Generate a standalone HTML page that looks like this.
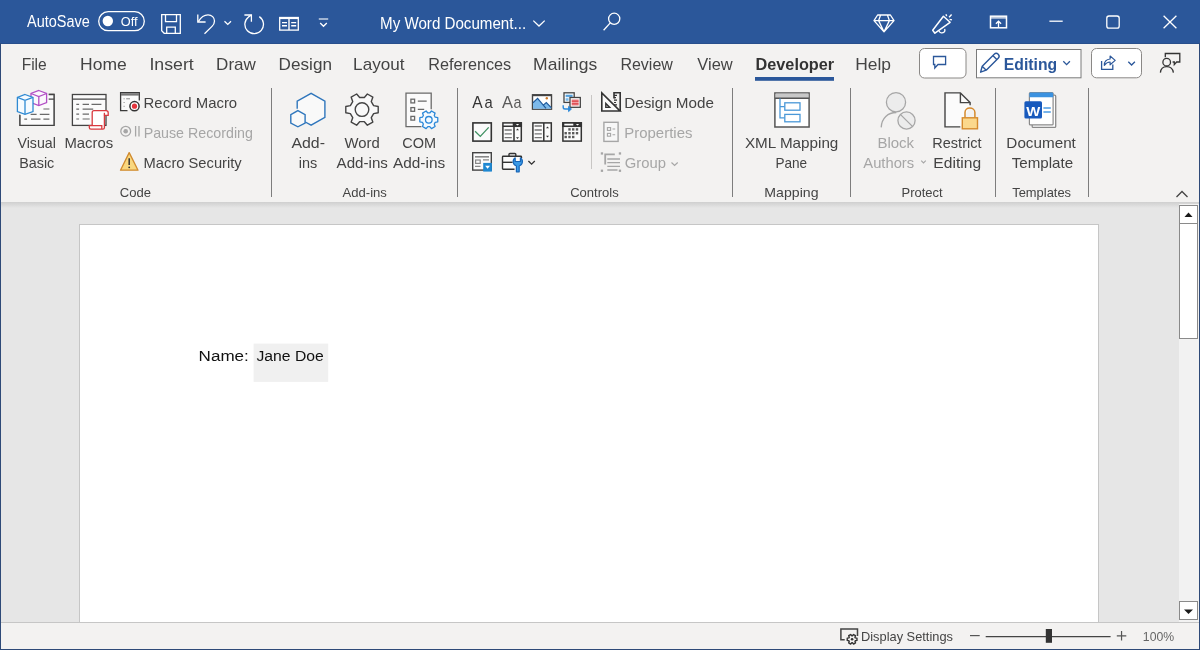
<!DOCTYPE html>
<html><head><meta charset="utf-8"><title>Word</title>
<style>
html,body{margin:0;padding:0;width:1200px;height:650px;overflow:hidden;background:#f3f2f1}
svg{display:block;will-change:transform}
text{font-family:"Liberation Sans",sans-serif;white-space:pre}
</style></head><body>
<svg width="1200" height="650" viewBox="0 0 1200 650">
<!-- backgrounds -->
<rect x="0" y="0" width="1200" height="650" fill="#f3f2f1"/>
<rect x="0" y="0" width="1200" height="43" fill="#2b579a"/>
<rect x="0" y="43" width="1200" height="1" fill="#284f8c"/>
<defs>
 <linearGradient id="shd" x1="0" y1="0" x2="0" y2="1">
  <stop offset="0" stop-color="#cfcfcf"/><stop offset="1" stop-color="#e6e6e6"/>
 </linearGradient>
</defs>
<rect x="1" y="202" width="1198" height="420" fill="#e6e6e6"/>
<rect x="1" y="202" width="1198" height="6" fill="url(#shd)"/>
<!-- page -->
<rect x="79.5" y="224.5" width="1019" height="420" fill="#ffffff" stroke="#c6c6c6" stroke-width="1"/>
<!-- scrollbar -->
<rect x="1179" y="204" width="20" height="418" fill="#f2f2f2"/>
<rect x="1179.5" y="205.5" width="18" height="18" fill="#ffffff" stroke="#8a8a8a"/>
<path d="M1184.5,217 L1188.5,212.5 L1192.5,217 Z" fill="#1a1a1a"/>
<rect x="1179.5" y="223.5" width="18" height="115" fill="#ffffff" stroke="#8a8a8a"/>
<rect x="1179.5" y="601.5" width="18" height="18" fill="#ffffff" stroke="#8a8a8a"/>
<path d="M1184,609.5 L1193,609.5 L1188.5,614 Z" fill="#1a1a1a"/>
<!-- status bar -->
<rect x="1" y="622" width="1198" height="27" fill="#f3f2f1"/>
<rect x="1" y="622" width="1198" height="1" fill="#c6c6c6"/>
<!-- window borders -->
<rect x="0" y="43" width="1" height="607" fill="#2e4a78"/>
<rect x="1199" y="43" width="1" height="607" fill="#2e4a78"/>
<rect x="0" y="649" width="1200" height="1" fill="#2e4a78"/>
<!-- doc content control -->
<rect x="253.6" y="343.6" width="74.6" height="38.3" fill="#f0f0f0"/>

<!-- ===== TITLE BAR ICONS ===== -->
<g fill="none" stroke="#ffffff" stroke-width="1.3">
 <!-- toggle -->
 <rect x="98.7" y="11.7" width="45.6" height="19" rx="9.5"/>
 <!-- save -->
 <path d="M161.7,14.6 H180.3 V33.3 H164.2 L161.7,30.8 Z"/>
 <path d="M165.5,14.6 V21.7 H176.5 V14.6"/>
 <path d="M166.7,33.3 V27.2 H175.3 V33.3"/>
 <!-- undo -->
 <path d="M197.8,14.6 V22 H205.6"/>
 <path d="M198.3,21.6 C201,17 204.5,14.8 208,14.8 C211.8,14.8 214.5,17.7 214.5,21 C214.5,23.2 213.6,24.8 212,26.4 L204.5,33.8"/>
 <!-- undo chevron -->
 <path d="M224.5,21.2 L227.75,24.4 L231,21.2"/>
 <!-- redo -->
 <path d="M259.3,16.6 A9.3,9.3 0 1 1 248.6,16.9 L251.4,15"/>
 <path d="M244.4,15 H251.4 V21.8"/>
 <!-- reading -->
 <rect x="279.7" y="17.5" width="18.6" height="12.6"/>
 <path d="M289,17.5 V30.1 M282,22.6 H287 M282,25.7 H287 M291.2,22.6 H296.2 M291.2,25.7 H296.2" stroke-width="1.4"/>
 <path d="M279.7,18.2 H298.3" stroke-width="1.8"/>
 <!-- customize -->
 <path d="M318.8,19 H328.2" stroke-width="1.1"/>
 <path d="M320.2,23 L323.5,26.3 L326.8,23"/>
 <!-- title chevron -->
 <path d="M533.3,20.6 L539,26 L544.7,20.6"/>
 <!-- search -->
 <circle cx="614.2" cy="18.8" r="5.6"/>
 <path d="M610.3,22.9 L603.6,30.3"/>
 <!-- diamond -->
 <path d="M877.6,15 H890.4 L894,20.6 L884,31.8 L874,20.6 Z M874,20.6 H894 M880.6,15 L878.6,20.6 L884,31.8 L889.4,20.6 L887.4,15" stroke-linejoin="round"/>
 <!-- megaphone -->
 <path d="M932.7,30.2 L943.4,16.3 L950.1,22.3 L934.9,33.2 Z" stroke-linejoin="round" stroke-width="1.5"/>
 <path d="M939,30.9 C939.5,33 942.5,33.6 944.2,32 C944.9,31.2 945.1,30 944.7,28.9" stroke-width="1.3"/>
 <path d="M945.9,14.3 L946.7,16.1 M949.1,17.2 L951.6,14.5 M949.6,19.4 L952,19.9" stroke-width="1.4"/>
<!-- ribbon display -->
 <rect x="990.5" y="16.2" width="16" height="11.6" stroke-width="1.5"/>
 <path d="M990.5,17.9 H1006.5" stroke-width="1.2"/>
 <path d="M998.5,27.8 V21.2 M995.9,23.8 L998.5,21.2 L1001.1,23.8" stroke-width="1.3"/>
<!-- min max close -->
 <path d="M1049.4,21.2 H1062.7"/>
 <rect x="1106.8" y="16" width="12.4" height="12.2" rx="2.2"/>
 <path d="M1163.6,15.8 L1176.4,28.2 M1176.4,15.8 L1163.6,28.2"/>
</g>
<circle cx="107.8" cy="21" r="5.2" fill="#ffffff"/>

<!-- ===== TAB ROW ===== -->
<rect x="755" y="77" width="79" height="3.8" fill="#2b579a"/>
<rect x="919.5" y="48.5" width="46.5" height="29.5" rx="5" fill="#ffffff" stroke="#8a8886"/>
<rect x="976.5" y="49.5" width="104.5" height="28.3" fill="#ffffff" stroke="#7a7a7a"/>
<rect x="1091.5" y="48.5" width="50" height="29.3" rx="5" fill="#ffffff" stroke="#8a8886"/>
<g fill="none" stroke="#2b579a" stroke-width="1.3">
 <path d="M933.5,56.5 H945.6 V64.5 H938 L934.8,68 V64.5 H933.5 Z" stroke-linejoin="miter"/>
 <!-- pencil -->
 <path d="M980.6,72.2 L982.2,66.2 L994.2,54.2 C995.3,53.1 997.1,53.1 998.2,54.2 C999.3,55.3 999.3,57.1 998.2,58.2 L986.2,70.2 Z M982.2,66.2 L986.2,70.2 M992.8,55.6 L996.8,59.6" stroke-width="1.4" stroke-linejoin="round"/>
 <path d="M1063.3,61.3 L1066.6,64.6 L1069.9,61.3"/>
 <!-- share -->
 <path d="M1101.6,61 V69.4 H1112.8 V64.4"/>
 <path d="M1104.3,65.3 C1104.3,61.6 1106.6,59.3 1110.1,59 V56 L1115.2,60.4 L1110.1,64.8 V62 C1107.6,62 1105.8,63.2 1104.3,65.3 Z" stroke-width="1.2" stroke-linejoin="round"/>
 <path d="M1128.3,61.7 L1131.6,65 L1134.9,61.7"/>
</g>
<g fill="none" stroke="#333333" stroke-width="1.3">
 <circle cx="1166.7" cy="62.2" r="3.8"/>
 <path d="M1160.4,72.6 C1160.8,68.6 1163.4,66.6 1166.7,66.6 C1170,66.6 1172.8,68.6 1173.4,72.6"/>
 <path d="M1165.3,57.3 V53.5 H1179.8 V62 H1176.6 L1174.3,64.6 V62 H1172.6"/>
</g>

<!-- ===== RIBBON SEPARATORS ===== -->
<g fill="#7d7d7d">
 <rect x="271" y="88" width="1" height="109"/>
 <rect x="457" y="88" width="1" height="109"/>
 <rect x="732" y="88" width="1" height="109"/>
 <rect x="850" y="88" width="1" height="109"/>
 <rect x="995" y="88" width="1" height="109"/>
 <rect x="1088" y="88" width="1" height="109"/>
</g>
<rect x="591" y="95" width="1" height="74" fill="#c8c6c4"/>
<path d="M1176.5,197 L1182,191.5 L1187.5,197" fill="none" stroke="#444" stroke-width="1.3"/>

<!-- ===== CODE GROUP ===== -->
<!-- Visual Basic -->
<g stroke-width="1.3" fill="none">
 <path d="M20,114.5 V125.3 H54 V94.5 H48.7" fill="#fbfbfb" stroke="#444"/>
 <path d="M20,114.5 V125.3 H54 V94.5 H44 V114.5 Z" fill="#fbfbfb" stroke="none"/>
 <path d="M20,115 V125.3 H54 V94.5 H48.7 M48.7,99.1 H54" stroke="#444"/>
 <path d="M43.4,109 H49.4 M30.6,114.3 H36.6 M39.8,114.3 H49.4 M24.3,119.1 H27.1 M31,119.1 H40.5 M43.4,119.1 H49.4" stroke="#6a6a6a" stroke-width="1.2"/>
 <!-- purple cube -->
 <path d="M38.8,90.5 L46.6,93.5 V102.6 L38.8,105.5 L31,102.6 V93.5 Z" fill="#fbf7fc" stroke="#b24ec5"/>
 <path d="M31,93.5 L38.8,96.6 L46.6,93.5 M38.8,96.6 V105.5" stroke="#b24ec5"/>
 <!-- blue cube -->
 <path d="M25,94.5 L33,97.4 V111.5 L25,114.3 L17.4,111.5 V97.4 Z" fill="#f6fbff" stroke="#2f8ad3"/>
 <path d="M17.4,97.4 L25,100.3 L33,97.4 M25,100.3 V114.3" stroke="#2f8ad3"/>
</g>
<!-- Macros -->
<g stroke-width="1.3" fill="none">
 <rect x="72.4" y="94.5" width="33.6" height="30.9" fill="#fbfbfb" stroke="#444"/>
 <path d="M72.4,99.2 H106" stroke="#444"/>
 <path d="M76.3,104.3 H79.1 M82.6,104.3 H89 M91.5,104.3 H101.4 M76.3,109.1 H79.1 M82.6,109.1 H93.2 M76.3,114.2 H79.1 M82.6,114.2 H89 M76.3,119 H79.1 M82.6,119 H89.7" stroke="#6a6a6a" stroke-width="1.2"/>
 <!-- scroll -->
 <path d="M92.2,126 V112.5 C92.2,111.3 93,110.6 94,110.6 H106 C107.3,110.6 108.2,111.5 108.2,112.8 V115.4 H104.4 V127.8 C104.4,128.6 103.7,129.2 102.9,129.2 H91 C89.9,129.2 89.3,128.5 89.3,127.5 V125.6 H101.8 V128.4" fill="#ffffff" stroke="#d9393f"/>
 <path d="M104.4,115.4 V112.8" stroke="#d9393f"/>
</g>
<!-- record macro -->
<g stroke-width="1.3" fill="none">
 <path d="M127.5,110.6 H120.6 V92.7 H139.3 V100.5" fill="#fbfbfb" stroke="#3a3a3a"/>
 <rect x="121" y="93.2" width="18" height="2.4" fill="#777" stroke="none"/>
 <path d="M123.6,98.8 H124.6 M126.2,98.8 H130 M123.6,102.5 H124.6 M123.6,106.3 H124.6" stroke="#888" stroke-width="1"/>
 <circle cx="134.5" cy="106.2" r="4.6" fill="#ffffff" stroke="#333" stroke-width="1.5"/>
 <circle cx="134.5" cy="106.2" r="2.6" fill="#e3343c" stroke="none"/>
</g>
<!-- pause -->
<g fill="none" stroke="#a6a6a6" stroke-width="1.3">
 <circle cx="125.7" cy="131.2" r="4.9"/>
 <path d="M135.6,126 V136.6 M139,126 V136.6"/>
</g>
<circle cx="125.7" cy="131.2" r="2.3" fill="#a6a6a6"/>
<!-- warning -->
<path d="M129.2,152.6 L120.5,170.2 H138 Z" fill="#f9d77e" stroke="#d08a2e" stroke-width="1.3" stroke-linejoin="round"/>
<path d="M129.2,158.3 V165" stroke="#333" stroke-width="1.5"/>
<circle cx="129.2" cy="167.3" r="0.9" fill="#333"/>

<!-- ===== ADD-INS GROUP ===== -->
<g stroke-width="1.4" fill="none" stroke="#2f76bc">
 <path d="M297.2,108.8 V101.1 L311.1,93.3 L324.9,101.1 V117.4 L311.1,125.2 L305.3,122" fill="#f9f9f9"/>
 <path d="M297.9,110.6 L305.1,114.6 V123 L297.9,126.8 L290.8,123 V114.6 Z" fill="#f9f9f9"/>
</g>
<!-- word add-ins gear -->
<path d="M373.63,105.60 L378.20,106.45 L378.20,112.75 L373.63,113.60 L371.28,117.67 L372.82,122.05 L367.37,125.20 L364.35,121.67 L359.65,121.67 L356.63,125.20 L351.18,122.05 L352.72,117.67 L350.37,113.60 L345.80,112.75 L345.80,106.45 L350.37,105.60 L352.72,101.53 L351.18,97.15 L356.63,94.00 L359.65,97.53 L364.35,97.53 L367.37,94.00 L372.82,97.15 L371.28,101.53 Z" fill="#f9f9f9" stroke="#444" stroke-width="1.4" stroke-linejoin="round"/>
<circle cx="362" cy="109.6" r="6.8" fill="none" stroke="#444" stroke-width="1.4"/>
<!-- COM add-ins -->
<g fill="none" stroke-width="1.3">
 <path d="M421.4,126.7 H406 V93.2 H431.2 V109.2" fill="#fbfbfb" stroke="#6a6a6a"/>
 <rect x="410.9" y="99.2" width="3.7" height="3.7" stroke="#6a6a6a"/>
 <rect x="410.9" y="107.6" width="3.7" height="3.7" stroke="#6a6a6a"/>
 <rect x="410.9" y="116.4" width="3.7" height="3.7" stroke="#6a6a6a"/>
 <path d="M417.8,101.1 H426.7 M417.8,109.3 H424.2" stroke="#6a6a6a"/>
 <path d="M435.20,117.22 L437.76,117.73 L437.76,121.87 L435.20,122.38 L434.24,124.05 L435.07,126.53 L431.49,128.60 L429.76,126.63 L427.84,126.63 L426.11,128.60 L422.53,126.53 L423.36,124.05 L422.40,122.38 L419.84,121.87 L419.84,117.73 L422.40,117.22 L423.36,115.55 L422.53,113.07 L426.11,111.00 L427.84,112.97 L429.76,112.97 L431.49,111.00 L435.07,113.07 L434.24,115.55 Z" fill="#f4faff" stroke="#2b88d8" stroke-linejoin="round"/>
 <circle cx="428.8" cy="119.8" r="3.3" stroke="#2b88d8"/>
</g>

<!-- ===== CONTROLS GROUP ===== -->
<!-- Aa rich -->
<text x="472.3" y="108.3" font-size="17.4" fill="#333" textLength="10.4" lengthAdjust="spacingAndGlyphs" style="font-family:'Liberation Sans'">A</text>
<text x="484.6" y="108.3" font-size="17.4" fill="#333" textLength="8.2" lengthAdjust="spacingAndGlyphs" style="font-family:'Liberation Sans'">a</text>
<!-- Aa plain -->
<text x="501.9" y="108.3" font-size="17.4" fill="#5a5a5a" textLength="11" lengthAdjust="spacingAndGlyphs" style="font-family:'Liberation Sans'">A</text>
<text x="513.6" y="108.3" font-size="17.4" fill="#5a5a5a" textLength="8" lengthAdjust="spacingAndGlyphs" style="font-family:'Liberation Sans'">a</text>
<!-- picture -->
<g stroke-width="1.4" fill="none">
 <rect x="532.5" y="94.8" width="19" height="14.4" fill="#ffffff" stroke="#444"/>
 <path d="M533,102.8 L537.6,98.4 L546,108.7 H533 Z" fill="#7cb9ea" stroke="none"/>
 <path d="M543,105 L546.3,102.6 L551.2,107.5 V108.7 H546 Z" fill="#7cb9ea" stroke="none"/>
 <path d="M533,102.8 L537.6,98.4 L546,108.4 M543.3,105.1 L546.3,102.6 L551.2,107.6" stroke="#1f5a9c" stroke-width="1.2"/>
 <path d="M532.5,95.3 H551.5" stroke="#444" stroke-width="1.8"/>
 <circle cx="546.8" cy="98.3" r="1.2" fill="#d07a2a" stroke="none"/>
</g>
<!-- building blocks -->
<g stroke-width="1.3" fill="none">
 <rect x="564" y="92.8" width="10.2" height="9.6" fill="#ffffff" stroke="#444"/>
 <rect x="565.6" y="94.6" width="7" height="2.6" fill="#7dbbe9" stroke="none"/>
 <path d="M565.8,95.9 H572.4" stroke="#3b8fd6" stroke-width="1"/>
 <rect x="565.6" y="98.2" width="3" height="2.6" fill="#7dbbe9" stroke="none"/>
 <rect x="570" y="97.5" width="10.3" height="9.8" fill="#ffffff" stroke="#444"/>
 <rect x="571.6" y="99.3" width="7.1" height="6.4" fill="#f19ea2" stroke="none"/>
 <path d="M571.8,101.2 H578.5 M571.8,103.8 H578.5" stroke="#d93a40" stroke-width="1.2"/>
 <path d="M563.2,105.2 V107.2 C563.2,108.3 564,109 565,109 H570" stroke="#2b88d8" stroke-width="1.4"/>
 <path d="M568.6,106.4 L571.4,109 L568.6,111.6 Z" fill="#2b88d8" stroke="#2b88d8" stroke-width="1"/>
</g>
<!-- checkbox -->
<rect x="472.9" y="122.9" width="18.4" height="18.2" fill="#fbfbfb" stroke="#333" stroke-width="1.6"/>
<path d="M475.1,131.3 L480.3,136.4 L488.7,127.4" fill="none" stroke="#3f9162" stroke-width="1.3"/>
<!-- combo -->
<g stroke-width="1.5" fill="none" stroke="#333">
 <rect x="502.9" y="122.9" width="18.4" height="18.2" fill="#fbfbfb"/>
 <rect x="513.5" y="122.9" width="7.8" height="3.4" fill="#333"/>
 <path d="M502.9,126.3 H521.3 M514,126.3 V141.1"/>
</g>
<path d="M515.8,123.9 H519.2 L517.5,125.6 Z" fill="#fff"/>
<path d="M504.6,130 H511.8 M504.6,133.9 H511.8 M504.6,137.6 H511.8" stroke="#777" stroke-width="1.3"/>
<path d="M516,130.3 H519 L517.5,128.6 Z M516,137.3 H519 L517.5,139 Z" fill="#333"/>
<!-- list -->
<g stroke-width="1.5" fill="none" stroke="#333">
 <rect x="532.9" y="122.9" width="18.4" height="18.2" fill="#fbfbfb"/>
 <path d="M543.8,122.9 V141.1"/>
</g>
<path d="M534.6,126 H541.8 M534.6,130 H541.8 M534.6,133.9 H541.8 M534.6,137.6 H541.8" stroke="#777" stroke-width="1.3"/>
<path d="M546,128.3 H549 L547.5,126.6 Z M546,135.7 H549 L547.5,137.4 Z" fill="#333"/>
<!-- date -->
<g stroke-width="1.5" fill="none" stroke="#333">
 <rect x="562.9" y="122.9" width="18.4" height="18.2" fill="#fbfbfb"/>
 <rect x="562.9" y="122.9" width="18.4" height="3.4" fill="#333"/>
</g>
<rect x="564.3" y="123.7" width="9" height="1.8" fill="#fff"/>
<path d="M575.8,123.9 H579.2 L577.5,125.6 Z" fill="#fff"/>
<g fill="#5a5a5a">
 <rect x="568.3" y="128.2" width="2.4" height="2.4"/><rect x="572" y="128.2" width="2.4" height="2.4"/><rect x="575.8" y="128.2" width="2.4" height="2.4"/>
 <rect x="564.5" y="132" width="2.4" height="2.4"/><rect x="568.3" y="132" width="2.4" height="2.4"/><rect x="572" y="132" width="2.4" height="2.4"/><rect x="575.8" y="132" width="2.4" height="2.4"/>
 <rect x="564.5" y="135.8" width="2.4" height="2.4"/><rect x="568.3" y="135.8" width="2.4" height="2.4"/><rect x="572" y="135.8" width="2.4" height="2.4"/>
</g>
<!-- legacy tools -->
<g fill="none" stroke-width="1.4">
 <rect x="472.7" y="152.7" width="18.6" height="17.4" fill="#fbfbfb" stroke="#444"/>
 <path d="M475,156.8 H489" stroke="#888" stroke-width="1.6"/>
 <rect x="475.6" y="160" width="4.6" height="3.4" stroke="#888" stroke-width="1.2"/>
 <path d="M483,159.9 H489 M475,166.4 H480.5" stroke="#888" stroke-width="1.2"/>
</g>
<rect x="483.2" y="162.9" width="8.7" height="8.7" fill="#1e88d2"/>
<path d="M485.2,165.8 H490 L487.6,168.8 Z" fill="#fff"/>
<!-- toolbox -->
<g fill="none" stroke="#333" stroke-width="1.4">
 <path d="M514.5,169.3 H503.2 C502.8,169.3 502.5,169 502.5,168.6 V157 C502.5,156.6 502.8,156.3 503.2,156.3 H520.8 C521.2,156.3 521.5,156.6 521.5,157 V158" fill="#fbfbfb"/>
 <path d="M509,156.3 V154.3 C509,153.8 509.4,153.5 509.9,153.5 H514.9 C515.4,153.5 515.8,153.8 515.8,154.3 V156.3"/>
 <path d="M502.5,162.3 H512.6"/>
</g>
<path d="M515.2,157.8 A4.6,4.6 0 0 0 516.4,166 V171.8 H519.2 V166 A4.6,4.6 0 0 0 520.4,157.8 V161.5 H515.2 Z" fill="#3a9ae6" stroke="#1766b8" stroke-width="1.2" stroke-linejoin="round"/>
<path d="M528.4,161 L531.6,164.2 L534.8,161" fill="none" stroke="#333" stroke-width="1.3"/>
<!-- design mode -->
<g fill="none" stroke="#333" stroke-width="1.6">
 <path d="M601.8,93 V111 H620 Z" fill="#fbfbfb" stroke-linejoin="miter"/>
 <path d="M605.8,103.5 V107.4 H609.7 Z" stroke-width="1.4"/>
 <path d="M614,98.6 V92.7 H620.2 V111" />
 <path d="M614,95.3 H617 M614,97.7 H616 M614,100.1 H617 M614,102.5 H616 M614,104.9 H617" stroke-width="1.2"/>
</g>
<!-- properties -->
<g fill="none" stroke="#a6a6a6" stroke-width="1.4">
 <rect x="603.9" y="122.3" width="14.2" height="19.1" fill="#f7f7f7"/>
 <rect x="607.4" y="127.6" width="3.2" height="2.8" stroke-width="1.1"/>
 <rect x="607.4" y="133.4" width="3.2" height="2.8" stroke-width="1.1"/>
 <path d="M612.5,129 H615.2 M612.5,134.8 H615.2" stroke-width="1.1"/>
</g>
<!-- group -->
<g fill="#a6a6a6">
 <rect x="600.8" y="152.3" width="2.3" height="2.3"/><rect x="618.8" y="152.3" width="2.3" height="2.3"/>
 <rect x="600.8" y="169.6" width="2.3" height="2.3"/><rect x="618.8" y="169.6" width="2.3" height="2.3"/>
</g>
<path d="M605.2,164.4 V154.4 H614.8" fill="none" stroke="#a6a6a6" stroke-width="1.8"/><path d="M607.3,159 H620 M607.3,162.6 H620 M607.3,166.4 H620 M607.3,170 H617.5" fill="none" stroke="#a6a6a6" stroke-width="1.4"/>
<path d="M671.5,162.5 L674.6,165.4 L677.7,162.5" fill="none" stroke="#a6a6a6" stroke-width="1.2"/>

<!-- ===== MAPPING ===== -->
<g fill="none" stroke-width="1.5">
 <rect x="774.9" y="93" width="34.2" height="34" fill="#ffffff" stroke="#555"/>
 <rect x="775.5" y="93.5" width="33" height="4.7" fill="#c8c8c8" stroke="none"/>
 <path d="M774.9,98.2 H809.1" stroke="#555"/>
 <path d="M780,98.5 V117.8 H784.6 M780,106.6 H784.6" stroke="#4a98d8" stroke-width="1.3"/>
 <rect x="784.8" y="102.8" width="15.2" height="7.4" stroke="#4a98d8" stroke-width="1.3"/>
 <rect x="784.8" y="114.4" width="15.2" height="7.4" stroke="#4a98d8" stroke-width="1.3"/>
</g>

<!-- ===== PROTECT ===== -->
<g fill="none" stroke="#a6a6a6" stroke-width="1.3">
 <path d="M881.2,127.4 C881.6,118 888,112.5 896.3,112.5" />
 <circle cx="896" cy="102.2" r="9.6" fill="#ececec"/>
 <circle cx="906.5" cy="120.5" r="8.6" fill="#ececec"/>
 <path d="M900.6,114.6 L912.4,126.4"/>
</g>
<g fill="none" stroke-width="1.4">
 <path d="M960.3,126.9 H945 V92.9 H960.4 L970.1,102.6 V105.3" fill="#fbfbfb" stroke="#444"/>
 <path d="M960.4,92.9 V102.6 H970.1" stroke="#444"/>
 <path d="M965,117.8 V112.5 C965,109.8 967.1,108 969.8,108 C972.5,108 974.9,109.8 974.9,112.5 V117.8" stroke="#d58a2c" stroke-width="1.5"/>
 <rect x="962.3" y="117.8" width="15.2" height="11" fill="#fbd88c" stroke="#d58a2c" stroke-width="1.4"/>
</g>

<!-- ===== TEMPLATES ===== -->
<g>
 <rect x="1032.2" y="95.2" width="23.5" height="32.2" rx="1" fill="#ffffff" stroke="#8a8a8a" stroke-width="1.3"/>
 <rect x="1029.4" y="92.6" width="23.7" height="32.3" rx="1" fill="#ffffff" stroke="#8a8a8a" stroke-width="1.2"/>
 <path d="M1029.4,97.2 V93.6 C1029.4,93 1029.9,92.4 1030.5,92.4 H1052 C1052.6,92.4 1053.2,93 1053.2,93.6 V97.2 Z" fill="#3b92e0"/>
 <rect x="1024.4" y="101.2" width="17.6" height="17.3" rx="1.5" fill="#185abd"/>
 <text x="1026.2" y="115.6" font-size="13.5" font-weight="700" fill="#fff" textLength="14" lengthAdjust="spacingAndGlyphs" style="font-family:'Liberation Sans'">W</text>
 <path d="M1043.4,108 H1050.8 M1043.4,112 H1050.8" stroke="#4a9ae4" stroke-width="1.6"/>
</g>

<!-- ===== STATUS BAR ===== -->
<path d="M844.7,639.8 H840.9 V628.9 H857.5 V635.9" fill="none" stroke="#444" stroke-width="1.5"/>
<path d="M855.27,637.82 L856.97,638.18 L856.97,640.42 L855.27,640.78 L854.97,641.31 L855.51,642.96 L853.56,644.08 L852.41,642.79 L851.79,642.79 L850.64,644.08 L848.69,642.96 L849.23,641.31 L848.93,640.78 L847.23,640.42 L847.23,638.18 L848.93,637.82 L849.23,637.29 L848.69,635.64 L850.64,634.52 L851.79,635.81 L852.41,635.81 L853.56,634.52 L855.51,635.64 L854.97,637.29 Z" fill="#f3f2f1" stroke="#333" stroke-width="1.4" stroke-linejoin="round"/>
<circle cx="852.1" cy="639.3" r="1.3" fill="#333"/>
<path d="M970,635.6 H979.7" stroke="#555" stroke-width="1.2"/>
<path d="M985.7,636.6 H1110.6" stroke="#444" stroke-width="1.3"/>
<rect x="1045.8" y="629" width="6.2" height="13.8" fill="#333"/>
<path d="M1116.8,635.8 H1126.3 M1121.55,631 V640.5" stroke="#555" stroke-width="1.2"/>
<path d="M921.2,160.6 L923.5,163 L925.8,160.6" fill="none" stroke="#a6a6a6" stroke-width="1.1"/>

<g>
<text x="27.00" y="26.70" font-size="15.6" font-weight="400" fill="#ffffff" textLength="62.82" lengthAdjust="spacingAndGlyphs">AutoSave</text>
<text x="120.79" y="25.60" font-size="13.4" font-weight="400" fill="#ffffff" textLength="16.78" lengthAdjust="spacingAndGlyphs">Off</text>
<text x="380.04" y="29.00" font-size="16.0" font-weight="400" fill="#ffffff" textLength="146.09" lengthAdjust="spacingAndGlyphs">My Word Document...</text>
<text x="21.65" y="70.00" font-size="16.4" font-weight="400" fill="#444444" textLength="25.11" lengthAdjust="spacingAndGlyphs">File</text>
<text x="80.10" y="70.00" font-size="16.4" font-weight="400" fill="#444444" textLength="46.74" lengthAdjust="spacingAndGlyphs">Home</text>
<text x="149.41" y="70.00" font-size="16.4" font-weight="400" fill="#444444" textLength="44.31" lengthAdjust="spacingAndGlyphs">Insert</text>
<text x="216.14" y="70.00" font-size="16.4" font-weight="400" fill="#444444" textLength="39.73" lengthAdjust="spacingAndGlyphs">Draw</text>
<text x="278.63" y="70.00" font-size="16.4" font-weight="400" fill="#444444" textLength="53.33" lengthAdjust="spacingAndGlyphs">Design</text>
<text x="353.13" y="70.00" font-size="16.4" font-weight="400" fill="#444444" textLength="51.33" lengthAdjust="spacingAndGlyphs">Layout</text>
<text x="428.20" y="70.00" font-size="16.4" font-weight="400" fill="#444444" textLength="83.04" lengthAdjust="spacingAndGlyphs">References</text>
<text x="533.10" y="70.00" font-size="16.4" font-weight="400" fill="#444444" textLength="64.12" lengthAdjust="spacingAndGlyphs">Mailings</text>
<text x="620.42" y="70.00" font-size="16.4" font-weight="400" fill="#444444" textLength="52.45" lengthAdjust="spacingAndGlyphs">Review</text>
<text x="697.30" y="70.00" font-size="16.4" font-weight="400" fill="#444444" textLength="35.37" lengthAdjust="spacingAndGlyphs">View</text>
<text x="755.52" y="70.00" font-size="16.4" font-weight="700" fill="#333333" textLength="78.62" lengthAdjust="spacingAndGlyphs">Developer</text>
<text x="855.21" y="70.00" font-size="16.4" font-weight="400" fill="#444444" textLength="35.82" lengthAdjust="spacingAndGlyphs">Help</text>
<text x="1003.86" y="69.50" font-size="17.2" font-weight="700" fill="#2b579a" textLength="53.30" lengthAdjust="spacingAndGlyphs">Editing</text>
<text x="17.50" y="147.80" font-size="15" font-weight="400" fill="#444444" textLength="38.38" lengthAdjust="spacingAndGlyphs">Visual</text>
<text x="19.15" y="167.70" font-size="15" font-weight="400" fill="#444444" textLength="35.14" lengthAdjust="spacingAndGlyphs">Basic</text>
<text x="64.41" y="147.80" font-size="15" font-weight="400" fill="#444444" textLength="48.74" lengthAdjust="spacingAndGlyphs">Macros</text>
<text x="143.61" y="107.80" font-size="15" font-weight="400" fill="#444444" textLength="93.53" lengthAdjust="spacingAndGlyphs">Record Macro</text>
<text x="143.66" y="137.80" font-size="15" font-weight="400" fill="#a6a6a6" textLength="109.24" lengthAdjust="spacingAndGlyphs">Pause Recording</text>
<text x="143.62" y="168.00" font-size="15" font-weight="400" fill="#444444" textLength="98.08" lengthAdjust="spacingAndGlyphs">Macro Security</text>
<text x="119.85" y="196.90" font-size="13.2" font-weight="400" fill="#444444" textLength="31.23" lengthAdjust="spacingAndGlyphs">Code</text>
<text x="291.40" y="147.80" font-size="15" font-weight="400" fill="#444444" textLength="33.58" lengthAdjust="spacingAndGlyphs">Add-</text>
<text x="298.83" y="167.70" font-size="15" font-weight="400" fill="#444444" textLength="18.50" lengthAdjust="spacingAndGlyphs">ins</text>
<text x="344.60" y="147.80" font-size="15" font-weight="400" fill="#444444" textLength="35.23" lengthAdjust="spacingAndGlyphs">Word</text>
<text x="336.60" y="167.70" font-size="15" font-weight="400" fill="#444444" textLength="51.25" lengthAdjust="spacingAndGlyphs">Add-ins</text>
<text x="402.28" y="147.80" font-size="15" font-weight="400" fill="#444444" textLength="33.78" lengthAdjust="spacingAndGlyphs">COM</text>
<text x="393.00" y="167.70" font-size="15" font-weight="400" fill="#444444" textLength="52.16" lengthAdjust="spacingAndGlyphs">Add-ins</text>
<text x="342.50" y="196.90" font-size="13.2" font-weight="400" fill="#444444" textLength="44.39" lengthAdjust="spacingAndGlyphs">Add-ins</text>
<text x="624.28" y="108.10" font-size="15" font-weight="400" fill="#444444" textLength="89.67" lengthAdjust="spacingAndGlyphs">Design Mode</text>
<text x="624.30" y="138.20" font-size="15" font-weight="400" fill="#a6a6a6" textLength="68.14" lengthAdjust="spacingAndGlyphs">Properties</text>
<text x="624.76" y="167.50" font-size="15" font-weight="400" fill="#a6a6a6" textLength="41.18" lengthAdjust="spacingAndGlyphs">Group</text>
<text x="570.15" y="196.90" font-size="13.2" font-weight="400" fill="#444444" textLength="48.54" lengthAdjust="spacingAndGlyphs">Controls</text>
<text x="744.90" y="147.80" font-size="15" font-weight="400" fill="#444444" textLength="93.45" lengthAdjust="spacingAndGlyphs">XML Mapping</text>
<text x="775.41" y="167.70" font-size="15" font-weight="400" fill="#444444" textLength="31.68" lengthAdjust="spacingAndGlyphs">Pane</text>
<text x="764.37" y="196.90" font-size="13.2" font-weight="400" fill="#444444" textLength="54.12" lengthAdjust="spacingAndGlyphs">Mapping</text>
<text x="877.40" y="147.80" font-size="15" font-weight="400" fill="#a6a6a6" textLength="36.75" lengthAdjust="spacingAndGlyphs">Block</text>
<text x="863.30" y="167.70" font-size="15" font-weight="400" fill="#a6a6a6" textLength="50.84" lengthAdjust="spacingAndGlyphs">Authors</text>
<text x="932.34" y="147.80" font-size="15" font-weight="400" fill="#444444" textLength="49.13" lengthAdjust="spacingAndGlyphs">Restrict</text>
<text x="933.35" y="167.70" font-size="15" font-weight="400" fill="#444444" textLength="47.73" lengthAdjust="spacingAndGlyphs">Editing</text>
<text x="901.56" y="196.90" font-size="13.2" font-weight="400" fill="#444444" textLength="41.11" lengthAdjust="spacingAndGlyphs">Protect</text>
<text x="1006.38" y="147.80" font-size="15" font-weight="400" fill="#444444" textLength="69.49" lengthAdjust="spacingAndGlyphs">Document</text>
<text x="1011.70" y="167.70" font-size="15" font-weight="400" fill="#444444" textLength="61.45" lengthAdjust="spacingAndGlyphs">Template</text>
<text x="1012.24" y="196.90" font-size="13.2" font-weight="400" fill="#444444" textLength="58.85" lengthAdjust="spacingAndGlyphs">Templates</text>
<text x="860.97" y="641.20" font-size="13.6" font-weight="400" fill="#444444" textLength="92.01" lengthAdjust="spacingAndGlyphs">Display Settings</text>
<text x="1142.84" y="641.00" font-size="13.0" font-weight="400" fill="#666666" textLength="31.31" lengthAdjust="spacingAndGlyphs">100%</text>
<text x="198.64" y="360.90" font-size="15.2" font-weight="400" fill="#111111" textLength="50.16" lengthAdjust="spacingAndGlyphs">Name:</text>
<text x="256.44" y="360.90" font-size="15.2" font-weight="400" fill="#111111" textLength="67.33" lengthAdjust="spacingAndGlyphs">Jane Doe</text>
</g>
</svg>
</body></html>
